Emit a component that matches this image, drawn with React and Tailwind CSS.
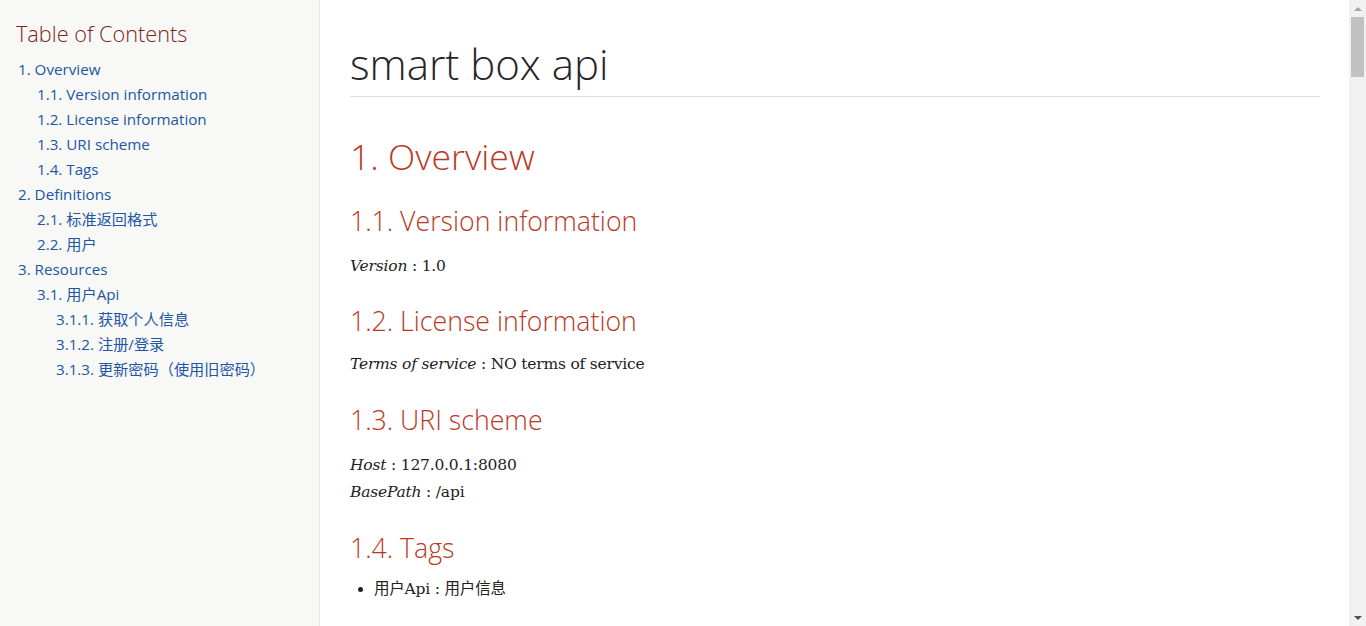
const toc = [
  { label: "1. Overview", level: 1 },
  { label: "1.1. Version information", level: 2 },
  { label: "1.2. License information", level: 2 },
  { label: "1.3. URI scheme", level: 2 },
  { label: "1.4. Tags", level: 2 },
  { label: "2. Definitions", level: 1 },
  { label: "2.1. 标准返回格式", level: 2 },
  { label: "2.2. 用户", level: 2 },
  { label: "3. Resources", level: 1 },
  { label: "3.1. 用户Api", level: 2 },
  { label: "3.1.1. 获取个人信息", level: 3 },
  { label: "3.1.2. 注册/登录", level: 3 },
  { label: "3.1.3. 更新密码（使用旧密码）", level: 3 },
];

const sans = "font-['Open_Sans','Noto_Sans_CJK_SC',sans-serif]";
const serif = "font-['DejaVu_Serif','Noto_Sans_CJK_SC',serif]";

function Sidebar() {
  return (
    <aside className={`w-[320px] shrink-0 bg-[#f8f8f7] border-r border-[#e7e7e9] pl-4 pt-[19px] ${sans}`}>
      <div className="text-[21.7px] leading-[30px] font-light text-[#7a2518]">Table of Contents</div>
      <ul className="mt-[8px]">
        {toc.map((item) => (
          <li
            key={item.label}
            className={`text-[15.2px] leading-[25px] text-[#2156a5] ${
              item.level === 1 ? "pl-[2px]" : item.level === 2 ? "pl-[21px]" : "pl-[40px]"
            }`}
          >
            {item.label}
          </li>
        ))}
      </ul>
    </aside>
  );
}

function Field({ name, value }) {
  return (
    <div className={`text-[15.5px] leading-[27px] tracking-[-0.2px] text-[#222] ${serif}`}>
      <em>{name}</em> : {value}
    </div>
  );
}

function H3({ children, className = "" }) {
  return (
    <h3 className={`${sans} text-[26.7px] leading-[32px] font-light text-[#ba3925] ${className}`}>{children}</h3>
  );
}

function Scrollbar() {
  return (
    <div className="w-[17px] shrink-0 bg-[#f1f1f1] flex flex-col items-center">
      <div className="h-[17px] flex items-center justify-center">
        <div className="w-0 h-0 border-l-[4px] border-r-[4px] border-b-[4px] border-l-transparent border-r-transparent border-b-[#a3a3a3]" />
      </div>
      <div className="w-[13px] h-[60px] bg-[#c1c1c1]" />
      <div className="flex-1" />
      <div className="h-[17px] flex items-center justify-center">
        <div className="w-0 h-0 border-l-[4px] border-r-[4px] border-t-[4px] border-l-transparent border-r-transparent border-t-[#505050]" />
      </div>
    </div>
  );
}

export default function App() {
  return (
    <div className="h-[626px] w-full flex overflow-hidden bg-white">
      <Sidebar />
      <main className="flex-1 pl-[30px] pr-[29px]">
        <div className="pt-[37px] border-b border-[#dddddf] pb-[6px]">
          <h1 className={`${sans} text-[42px] leading-[53px] font-light text-[#262626]`}>smart box api</h1>
        </div>
        <h2 className={`${sans} mt-[37px] text-[35.6px] leading-[44px] font-light text-[#ba3925]`}>1. Overview</h2>
        <H3 className="mt-[27px]">1.1. Version information</H3>
        <div className="mt-[16px]">
          <Field name="Version" value="1.0" />
        </div>
        <H3 className="mt-[25px]">1.2. License information</H3>
        <div className="mt-[14px]">
          <Field name="Terms of service" value="NO terms of service" />
        </div>
        <H3 className="mt-[26px]">1.3. URI scheme</H3>
        <div className="mt-[16px]">
          <Field name="Host" value="127.0.0.1:8080" />
          <Field name="BasePath" value="/api" />
        </div>
        <H3 className="mt-[26px]">1.4. Tags</H3>
        <ul className={`mt-[12px] ml-[24px] list-disc text-[15.5px] leading-[27px] tracking-[-0.2px] text-[#222] ${serif}`}>
          <li>用户Api : 用户信息</li>
        </ul>
      </main>
      <Scrollbar />
    </div>
  );
}
